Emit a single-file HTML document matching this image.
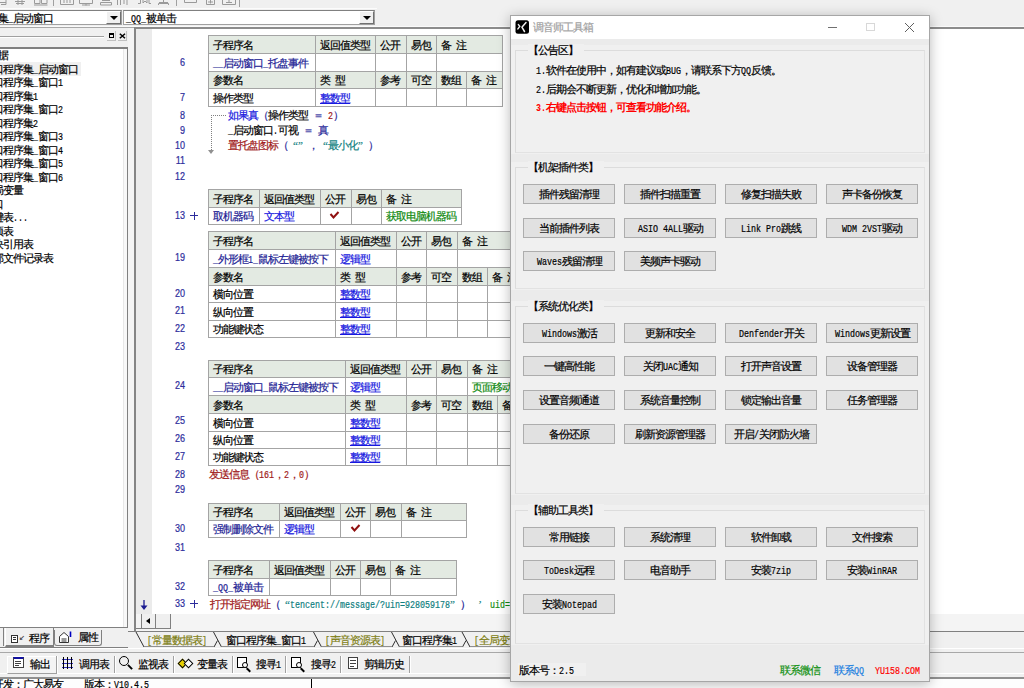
<!DOCTYPE html><html><head><meta charset="utf-8"><style>
*{margin:0;padding:0;box-sizing:border-box}
html,body{width:1024px;height:688px;overflow:hidden;background:#f0f0f0;font-family:"Liberation Sans",sans-serif;font-size:10px}
div{position:absolute}
.t{white-space:nowrap;letter-spacing:-1px;-webkit-text-stroke:0.2px currentColor}
.m{font-family:"Liberation Mono",monospace}
.s{font-family:"Liberation Serif",serif}
.a{display:inline-block;letter-spacing:0;font-family:"Liberation Mono",monospace;font-size:10px;transform:scaleX(.8333);transform-origin:0 50%;white-space:pre;overflow:visible}
.q{display:inline-block;letter-spacing:0;width:10px;font-family:"Liberation Serif",serif}
</style></head><body><div style="left:0px;top:0px;width:377px;height:9px;background:#f0f0f0;border-bottom:1px solid #fcfcfc"></div>
<svg style="position:absolute;left:0;top:0" width="250" height="9"><g fill="none" stroke="#9a9a9a" stroke-width="1">
<path d="M0 2.5 H6 M1 4.5 H6 V0"/>
<path d="M15 1.5 H25 M18 0 V5 M22 0 V5 M16 3.5 H24"/>
<path d="M34.5 0 V3.5 H40 V0 M41.5 0 V3.5 H47 V0 M34 5 H47.5"/>
<path d="M60.5 0 V4.5 H73.5 V0 M64 0 V3 M67 0 V3 M70 0 V3"/>
<path d="M79.5 0 V3.5 H92.5 V0 M86 3.5 V5.5 M82 5 H90"/>
<path d="M102 0.5 H110 M100.5 2.5 H111.5 V5 H100.5 Z"/>
<path d="M117.5 0 V5 M120.5 0 V5 M124 0 V4 M127 0 V5"/>
<path d="M138 3.5 H140.5 V0 M143 0 V3 L145 1 L147 3 V0 M149 0 V3.5 H151"/>
<path d="M163.5 0 V2.5 M159 2.5 H168 M158.5 5 V3.5 H168.5 V5"/>
<path d="M184.5 0 V2.5 H196.5 V0"/>
<path d="M206.5 0 V4.5 H214.5 V0 M210.5 0 V3.5 M208 2 H213"/>
<path d="M222.5 0 V4.5 H235.5 V0 M226 2.5 H232 M229 0 V3"/>
</g>
<path d="M53.5 0 V6 M176.5 0 V6 M239.5 0 V7" stroke="#a0a0a0" stroke-width="1"/>
</svg>
<div style="left:0px;top:10px;width:122px;height:15px;background:#fff;border:1px solid #a0a0a0;border-left:none;border-top-color:#808080"></div>
<div style="left:106px;top:11px;width:15px;height:13px;background:#f0f0f0;border-right:1px solid #707070;border-bottom:1px solid #707070;border-left:1px solid #fff;border-top:1px solid #fff"></div>
<div style="left:110px;top:16px;width:0;height:0;border-left:4px solid transparent;border-right:4px solid transparent;border-top:4px solid #000"></div>
<div class="t" style="left:-2px;top:11.5px;color:#000;font-size:11px;line-height:12px;text-align:left;">集<span class="a" style="width:5.0px">_</span>启动窗口</div>
<div style="left:123px;top:10px;width:252px;height:15px;background:#fff;border:1px solid #a0a0a0;border-top-color:#808080"></div>
<div style="left:359px;top:11px;width:15px;height:13px;background:#f0f0f0;border-right:1px solid #707070;border-bottom:1px solid #707070;border-left:1px solid #fff;border-top:1px solid #fff"></div>
<div style="left:363px;top:16px;width:0;height:0;border-left:4px solid transparent;border-right:4px solid transparent;border-top:4px solid #000"></div>
<div class="t" style="left:126px;top:11.5px;color:#000;font-size:11px;line-height:12px;text-align:left;"><span class="a" style="width:20.0px">_QQ_</span>被单击</div>
<div style="left:0px;top:26px;width:1024px;height:1px;background:#fafafa"></div>
<div style="left:0px;top:27px;width:1024px;height:1px;background:#a8a8a8"></div>
<div style="left:0px;top:36px;width:104px;height:1px;background:#a0a0a0"></div>
<div style="left:0px;top:37px;width:104px;height:1px;background:#fff"></div>
<div style="left:107px;top:31px;width:9px;height:10px;background:#f0f0f0;border-right:1px solid #c0c0c0;border-bottom:1px solid #c0c0c0"></div>
<div style="left:109px;top:33px;width:5px;height:5px;border:1px solid #000;border-top:2px solid #000"></div>
<div style="left:118px;top:31px;width:9px;height:10px;background:#f0f0f0;border-right:1px solid #c0c0c0;border-bottom:1px solid #c0c0c0"></div>
<svg style="position:absolute;left:119px;top:33px" width="7" height="6"><path d="M0.8 0.8 L6 5.2 M6 0.8 L0.8 5.2" stroke="#000" stroke-width="1.5"/></svg>
<div style="left:0px;top:47px;width:128px;height:581px;background:#fff;border-top:2px solid #808080;border-right:1px solid #808080"></div>
<div style="left:123px;top:49px;width:1px;height:578px;background:#e8e8e8"></div>
<div style="left:124px;top:49px;width:3px;height:578px;background:#f8f8f8"></div>
<div style="left:0px;top:62px;width:81px;height:14px;background:#f0f0f0"></div>
<div class="t" style="left:-2px;top:49.3px;color:#000;font-size:11px;line-height:12px;text-align:left;">据</div>
<div class="t" style="left:-7px;top:62.8px;color:#000;font-size:11px;line-height:12px;text-align:left;">口程序集<span class="a" style="width:5.0px">_</span>启动窗口</div>
<div class="t" style="left:-7px;top:76.3px;color:#000;font-size:11px;line-height:12px;text-align:left;">口程序集<span class="a" style="width:5.0px">_</span>窗口<span class="a" style="width:5.0px">1</span></div>
<div class="t" style="left:-7px;top:89.7px;color:#000;font-size:11px;line-height:12px;text-align:left;">口程序集<span class="a" style="width:5.0px">1</span></div>
<div class="t" style="left:-7px;top:103.2px;color:#000;font-size:11px;line-height:12px;text-align:left;">口程序集<span class="a" style="width:5.0px">_</span>窗口<span class="a" style="width:5.0px">2</span></div>
<div class="t" style="left:-7px;top:116.7px;color:#000;font-size:11px;line-height:12px;text-align:left;">口程序集<span class="a" style="width:5.0px">2</span></div>
<div class="t" style="left:-7px;top:130.2px;color:#000;font-size:11px;line-height:12px;text-align:left;">口程序集<span class="a" style="width:5.0px">_</span>窗口<span class="a" style="width:5.0px">3</span></div>
<div class="t" style="left:-7px;top:143.7px;color:#000;font-size:11px;line-height:12px;text-align:left;">口程序集<span class="a" style="width:5.0px">_</span>窗口<span class="a" style="width:5.0px">4</span></div>
<div class="t" style="left:-7px;top:157.1px;color:#000;font-size:11px;line-height:12px;text-align:left;">口程序集<span class="a" style="width:5.0px">_</span>窗口<span class="a" style="width:5.0px">5</span></div>
<div class="t" style="left:-7px;top:170.6px;color:#000;font-size:11px;line-height:12px;text-align:left;">口程序集<span class="a" style="width:5.0px">_</span>窗口<span class="a" style="width:5.0px">6</span></div>
<div class="t" style="left:-7px;top:184.1px;color:#000;font-size:11px;line-height:12px;text-align:left;">局变量</div>
<div class="t" style="left:-7px;top:197.6px;color:#000;font-size:11px;line-height:12px;text-align:left;">口</div>
<div class="t" style="left:-7px;top:211.1px;color:#000;font-size:11px;line-height:12px;text-align:left;">键表<span class="a" style="width:15.0px">...</span></div>
<div class="t" style="left:-7px;top:224.5px;color:#000;font-size:11px;line-height:12px;text-align:left;">项表</div>
<div class="t" style="left:-7px;top:238.0px;color:#000;font-size:11px;line-height:12px;text-align:left;">块引用表</div>
<div class="t" style="left:-7px;top:251.5px;color:#000;font-size:11px;line-height:12px;text-align:left;">部文件记录表</div>
<div style="left:0px;top:627px;width:128px;height:1px;background:#808080"></div>
<div style="left:0px;top:647px;width:128px;height:1px;background:#808080"></div>
<div style="left:5px;top:628px;width:49px;height:19px;background:#f0f0f0;border-left:1px solid #fff;border-right:1px solid #808080;border-bottom:2px solid #808080"></div>
<div style="left:54px;top:630px;width:48px;height:16px;background:#f0f0f0;border:1px solid #808080;border-top:none;border-radius:0 0 3px 3px"></div>
<div style="left:0px;top:628px;width:4px;height:18px;border-right:1px solid #808080"></div>
<div class="t" style="left:29px;top:631.5px;color:#000;font-size:11px;line-height:12px;text-align:left;">程序</div>
<div class="t" style="left:78px;top:630.5px;color:#000;font-size:11px;line-height:12px;text-align:left;">属性</div>
<div style="left:11px;top:635px;width:7px;height:8px;border:1px solid #333;background:#fff"></div>
<div style="left:13px;top:637px;width:3px;height:1px;background:#333"></div>
<div style="left:13px;top:639px;width:3px;height:1px;background:#333"></div>
<div class="t" style="left:19px;top:632.0px;color:#333;font-size:7px;line-height:12px;text-align:left;">↙</div>
<svg style="position:absolute;left:58px;top:631px" width="15" height="13"><path d="M1.5 5.5 L6 1.5 L10.5 5.5 V11.5 H1.5 Z M3.5 8 H8.5 M3.5 10 H8.5" fill="#fff" stroke="#333" stroke-width="1"/><path d="M12.5 0.5 V6" stroke="#0000c0" stroke-width="1.6"/></svg>
<div style="left:128px;top:28px;width:6px;height:604px;background:#f4f4f4"></div>
<div style="left:134px;top:27px;width:890px;height:605px;background:#fff;border-left:2px solid #858585;border-top:2px solid #8c8c8c"></div>
<div style="left:136px;top:29px;width:16px;height:585px;background:#ebebeb"></div>
<div style="left:136px;top:614px;width:888px;height:17px;background:#f4f4f4"></div>
<div style="left:136px;top:628px;width:35px;height:1px;background:#808080"></div>
<div style="left:141px;top:614px;width:1px;height:14px;background:#808080"></div>
<div style="left:142px;top:614px;width:14px;height:14px;background:#f0f0f0;border-right:1px solid #808080"></div>
<div style="left:146px;top:618px;width:0;height:0;border-top:3px solid transparent;border-bottom:3px solid transparent;border-right:4px solid #000"></div>
<div style="left:156px;top:614px;width:15px;height:14px;background:#efefef;border-right:1px solid #808080"></div>
<div style="left:208px;top:35px;width:295px;height:19px;background:#e3eae2;border:1px solid #a4a4a4"></div>
<div style="left:315px;top:35px;width:1px;height:19px;background:#a4a4a4"></div>
<div style="left:375px;top:35px;width:1px;height:19px;background:#a4a4a4"></div>
<div style="left:406px;top:35px;width:1px;height:19px;background:#a4a4a4"></div>
<div style="left:436px;top:35px;width:1px;height:19px;background:#a4a4a4"></div>
<div style="left:208px;top:53px;width:295px;height:19px;background:#fff;border:1px solid #a4a4a4"></div>
<div style="left:315px;top:53px;width:1px;height:19px;background:#a4a4a4"></div>
<div style="left:375px;top:53px;width:1px;height:19px;background:#a4a4a4"></div>
<div style="left:406px;top:53px;width:1px;height:19px;background:#a4a4a4"></div>
<div style="left:436px;top:53px;width:1px;height:19px;background:#a4a4a4"></div>
<div style="left:208px;top:71px;width:295px;height:18px;background:#e3eae2;border:1px solid #a4a4a4"></div>
<div style="left:315px;top:71px;width:1px;height:18px;background:#a4a4a4"></div>
<div style="left:375px;top:71px;width:1px;height:18px;background:#a4a4a4"></div>
<div style="left:406px;top:71px;width:1px;height:18px;background:#a4a4a4"></div>
<div style="left:436px;top:71px;width:1px;height:18px;background:#a4a4a4"></div>
<div style="left:466px;top:71px;width:1px;height:18px;background:#a4a4a4"></div>
<div style="left:208px;top:88px;width:295px;height:19px;background:#fff;border:1px solid #a4a4a4"></div>
<div style="left:315px;top:88px;width:1px;height:19px;background:#a4a4a4"></div>
<div style="left:375px;top:88px;width:1px;height:19px;background:#a4a4a4"></div>
<div style="left:406px;top:88px;width:1px;height:19px;background:#a4a4a4"></div>
<div style="left:436px;top:88px;width:1px;height:19px;background:#a4a4a4"></div>
<div style="left:466px;top:88px;width:1px;height:19px;background:#a4a4a4"></div>
<div class="t" style="left:213px;top:38.5px;color:#000;font-size:11px;line-height:12px;text-align:left;">子程序名</div>
<div class="t" style="left:320px;top:38.5px;color:#000;font-size:11px;line-height:12px;text-align:left;">返回值类型</div>
<div class="t" style="left:380px;top:38.5px;color:#000;font-size:11px;line-height:12px;text-align:left;">公开</div>
<div class="t" style="left:411px;top:38.5px;color:#000;font-size:11px;line-height:12px;text-align:left;">易包</div>
<div class="t" style="left:441px;top:38.5px;color:#000;font-size:11px;line-height:12px;text-align:left;">备<span class="a" style="width:5.0px"> </span>注</div>
<div class="t" style="left:213px;top:56.5px;color:#1c1c94;font-size:11px;line-height:12px;text-align:left;"><span class="a" style="width:10.0px">__</span>启动窗口<span class="a" style="width:5.0px">_</span>托盘事件</div>
<div class="t" style="left:213px;top:74.0px;color:#000;font-size:11px;line-height:12px;text-align:left;">参数名</div>
<div class="t" style="left:320px;top:74.0px;color:#000;font-size:11px;line-height:12px;text-align:left;">类<span class="a" style="width:5.0px"> </span>型</div>
<div class="t" style="left:380px;top:74.0px;color:#000;font-size:11px;line-height:12px;text-align:left;">参考</div>
<div class="t" style="left:411px;top:74.0px;color:#000;font-size:11px;line-height:12px;text-align:left;">可空</div>
<div class="t" style="left:441px;top:74.0px;color:#000;font-size:11px;line-height:12px;text-align:left;">数组</div>
<div class="t" style="left:471px;top:74.0px;color:#000;font-size:11px;line-height:12px;text-align:left;">备<span class="a" style="width:5.0px"> </span>注</div>
<div class="t" style="left:213px;top:91.5px;color:#000;font-size:11px;line-height:12px;text-align:left;">操作类型</div>
<div class="t" style="left:320px;top:91.5px;color:#1818e0;font-size:11px;line-height:12px;text-align:left;text-decoration:underline">整数型</div>
<div class="t" style="left:154px;top:56.5px;width:31px;text-align:right;line-height:12px;letter-spacing:0;color:#2c2c9c;font-size:10px;font-family:Liberation Sans;transform:scaleX(.9);transform-origin:100% 50%">6</div>
<div class="t" style="left:154px;top:91.5px;width:31px;text-align:right;line-height:12px;letter-spacing:0;color:#2c2c9c;font-size:10px;font-family:Liberation Sans;transform:scaleX(.9);transform-origin:100% 50%">7</div>
<div class="t" style="left:154px;top:109.5px;width:31px;text-align:right;line-height:12px;letter-spacing:0;color:#2c2c9c;font-size:10px;font-family:Liberation Sans;transform:scaleX(.9);transform-origin:100% 50%">8</div>
<div class="t" style="left:154px;top:124.5px;width:31px;text-align:right;line-height:12px;letter-spacing:0;color:#2c2c9c;font-size:10px;font-family:Liberation Sans;transform:scaleX(.9);transform-origin:100% 50%">9</div>
<div class="t" style="left:154px;top:139.5px;width:31px;text-align:right;line-height:12px;letter-spacing:0;color:#2c2c9c;font-size:10px;font-family:Liberation Sans;transform:scaleX(.9);transform-origin:100% 50%">10</div>
<div class="t" style="left:154px;top:154.5px;width:31px;text-align:right;line-height:12px;letter-spacing:0;color:#2c2c9c;font-size:10px;font-family:Liberation Sans;transform:scaleX(.9);transform-origin:100% 50%">11</div>
<div class="t" style="left:154px;top:170.5px;width:31px;text-align:right;line-height:12px;letter-spacing:0;color:#2c2c9c;font-size:10px;font-family:Liberation Sans;transform:scaleX(.9);transform-origin:100% 50%">12</div>
<div style="left:211px;top:115px;width:15px;height:37px;border-left:1px dotted #808080;border-top:1px dotted #808080"></div>
<div style="left:208px;top:150px;width:0;height:0;border-left:3.5px solid transparent;border-right:3.5px solid transparent;border-top:4px solid #909090"></div>
<div class="t" style="left:228px;top:109.0px;color:#1818e0;font-size:11px;line-height:12px;text-align:left;">如果真</div>
<div class="t" style="left:258px;top:109.0px;color:#000;font-size:11px;line-height:12px;text-align:left;"><span style="color:#2a2a9a">（</span>操作类型<span class="a" style="width:5.0px"> </span><span style="color:#2a2a9a">＝</span><span class="a" style="width:5.0px"> </span><span style="color:#a01010"><span class="a" style="width:5.0px">2</span></span><span style="color:#2a2a9a">）</span></div>
<div class="t" style="left:228px;top:124.0px;color:#000;font-size:11px;line-height:12px;text-align:left;"><span class="a" style="width:5.0px">_</span>启动窗口<span class="a" style="width:5.0px">.</span>可视<span class="a" style="width:5.0px"> </span><span style="color:#2a2a9a">＝<span class="a" style="width:5.0px"> </span>真</span></div>
<div class="t" style="left:228px;top:139.0px;color:#a01818;font-size:11px;line-height:12px;text-align:left;">置托盘图标</div>
<div class="t" style="left:278px;top:139.0px;color:#2a2a9a;font-size:11px;line-height:12px;text-align:left;">（<span style="color:#108080"><span class="q" style="text-align:right">“</span><span class="q">”</span></span>，<span style="color:#108080"><span class="q" style="text-align:right">“</span>最小化<span class="q">”</span></span>）</div>
<div style="left:208px;top:189px;width:254px;height:19px;background:#e3eae2;border:1px solid #a4a4a4"></div>
<div style="left:259px;top:189px;width:1px;height:19px;background:#a4a4a4"></div>
<div style="left:320px;top:189px;width:1px;height:19px;background:#a4a4a4"></div>
<div style="left:351px;top:189px;width:1px;height:19px;background:#a4a4a4"></div>
<div style="left:381px;top:189px;width:1px;height:19px;background:#a4a4a4"></div>
<div style="left:208px;top:207px;width:254px;height:18px;background:#fff;border:1px solid #a4a4a4"></div>
<div style="left:259px;top:207px;width:1px;height:18px;background:#a4a4a4"></div>
<div style="left:320px;top:207px;width:1px;height:18px;background:#a4a4a4"></div>
<div style="left:351px;top:207px;width:1px;height:18px;background:#a4a4a4"></div>
<div style="left:381px;top:207px;width:1px;height:18px;background:#a4a4a4"></div>
<div class="t" style="left:213px;top:192.5px;color:#000;font-size:11px;line-height:12px;text-align:left;">子程序名</div>
<div class="t" style="left:264px;top:192.5px;color:#000;font-size:11px;line-height:12px;text-align:left;">返回值类型</div>
<div class="t" style="left:325px;top:192.5px;color:#000;font-size:11px;line-height:12px;text-align:left;">公开</div>
<div class="t" style="left:356px;top:192.5px;color:#000;font-size:11px;line-height:12px;text-align:left;">易包</div>
<div class="t" style="left:386px;top:192.5px;color:#000;font-size:11px;line-height:12px;text-align:left;">备<span class="a" style="width:5.0px"> </span>注</div>
<div class="t" style="left:213px;top:210.0px;color:#1c1c94;font-size:11px;line-height:12px;text-align:left;">取机器码</div>
<div class="t" style="left:264px;top:210.0px;color:#1818e0;font-size:11px;line-height:12px;text-align:left;">文本型</div>
<div class="t" style="left:386px;top:210.0px;color:#108a10;font-size:11px;line-height:12px;text-align:left;">获取电脑机器码</div>
<svg style="position:absolute;left:329px;top:210px" width="11" height="10"><path d="M1.5 4 L4.5 7.5 L9.5 2" stroke="#901010" stroke-width="2" fill="none"/></svg>
<div class="t" style="left:154px;top:210.0px;width:31px;text-align:right;line-height:12px;letter-spacing:0;color:#2c2c9c;font-size:10px;font-family:Liberation Sans;transform:scaleX(.9);transform-origin:100% 50%">13</div>
<div style="left:190px;top:215px;width:8px;height:1px;background:#2c2c9c"></div>
<div style="left:193.5px;top:211.5px;width:1px;height:8px;background:#2c2c9c"></div>
<div style="left:208px;top:231px;width:333px;height:19px;background:#e3eae2;border:1px solid #a4a4a4"></div>
<div style="left:335px;top:231px;width:1px;height:19px;background:#a4a4a4"></div>
<div style="left:396px;top:231px;width:1px;height:19px;background:#a4a4a4"></div>
<div style="left:426px;top:231px;width:1px;height:19px;background:#a4a4a4"></div>
<div style="left:457px;top:231px;width:1px;height:19px;background:#a4a4a4"></div>
<div style="left:208px;top:249px;width:333px;height:19px;background:#fff;border:1px solid #a4a4a4"></div>
<div style="left:335px;top:249px;width:1px;height:19px;background:#a4a4a4"></div>
<div style="left:396px;top:249px;width:1px;height:19px;background:#a4a4a4"></div>
<div style="left:426px;top:249px;width:1px;height:19px;background:#a4a4a4"></div>
<div style="left:457px;top:249px;width:1px;height:19px;background:#a4a4a4"></div>
<div style="left:208px;top:267px;width:333px;height:19px;background:#e3eae2;border:1px solid #a4a4a4"></div>
<div style="left:335px;top:267px;width:1px;height:19px;background:#a4a4a4"></div>
<div style="left:396px;top:267px;width:1px;height:19px;background:#a4a4a4"></div>
<div style="left:426px;top:267px;width:1px;height:19px;background:#a4a4a4"></div>
<div style="left:457px;top:267px;width:1px;height:19px;background:#a4a4a4"></div>
<div style="left:487px;top:267px;width:1px;height:19px;background:#a4a4a4"></div>
<div style="left:208px;top:285px;width:333px;height:18px;background:#fff;border:1px solid #a4a4a4"></div>
<div style="left:335px;top:285px;width:1px;height:18px;background:#a4a4a4"></div>
<div style="left:396px;top:285px;width:1px;height:18px;background:#a4a4a4"></div>
<div style="left:426px;top:285px;width:1px;height:18px;background:#a4a4a4"></div>
<div style="left:457px;top:285px;width:1px;height:18px;background:#a4a4a4"></div>
<div style="left:487px;top:285px;width:1px;height:18px;background:#a4a4a4"></div>
<div style="left:208px;top:302px;width:333px;height:19px;background:#fff;border:1px solid #a4a4a4"></div>
<div style="left:335px;top:302px;width:1px;height:19px;background:#a4a4a4"></div>
<div style="left:396px;top:302px;width:1px;height:19px;background:#a4a4a4"></div>
<div style="left:426px;top:302px;width:1px;height:19px;background:#a4a4a4"></div>
<div style="left:457px;top:302px;width:1px;height:19px;background:#a4a4a4"></div>
<div style="left:487px;top:302px;width:1px;height:19px;background:#a4a4a4"></div>
<div style="left:208px;top:320px;width:333px;height:18px;background:#fff;border:1px solid #a4a4a4"></div>
<div style="left:335px;top:320px;width:1px;height:18px;background:#a4a4a4"></div>
<div style="left:396px;top:320px;width:1px;height:18px;background:#a4a4a4"></div>
<div style="left:426px;top:320px;width:1px;height:18px;background:#a4a4a4"></div>
<div style="left:457px;top:320px;width:1px;height:18px;background:#a4a4a4"></div>
<div style="left:487px;top:320px;width:1px;height:18px;background:#a4a4a4"></div>
<div class="t" style="left:213px;top:234.5px;color:#000;font-size:11px;line-height:12px;text-align:left;">子程序名</div>
<div class="t" style="left:340px;top:234.5px;color:#000;font-size:11px;line-height:12px;text-align:left;">返回值类型</div>
<div class="t" style="left:401px;top:234.5px;color:#000;font-size:11px;line-height:12px;text-align:left;">公开</div>
<div class="t" style="left:431px;top:234.5px;color:#000;font-size:11px;line-height:12px;text-align:left;">易包</div>
<div class="t" style="left:462px;top:234.5px;color:#000;font-size:11px;line-height:12px;text-align:left;">备<span class="a" style="width:5.0px"> </span>注</div>
<div class="t" style="left:213px;top:252.5px;color:#1c1c94;font-size:11px;line-height:12px;text-align:left;"><span class="a" style="width:5.0px">_</span>外形框<span class="a" style="width:10.0px">1_</span>鼠标左键被按下</div>
<div class="t" style="left:340px;top:252.5px;color:#1818e0;font-size:11px;line-height:12px;text-align:left;">逻辑型</div>
<div class="t" style="left:213px;top:270.5px;color:#000;font-size:11px;line-height:12px;text-align:left;">参数名</div>
<div class="t" style="left:340px;top:270.5px;color:#000;font-size:11px;line-height:12px;text-align:left;">类<span class="a" style="width:5.0px"> </span>型</div>
<div class="t" style="left:401px;top:270.5px;color:#000;font-size:11px;line-height:12px;text-align:left;">参考</div>
<div class="t" style="left:431px;top:270.5px;color:#000;font-size:11px;line-height:12px;text-align:left;">可空</div>
<div class="t" style="left:462px;top:270.5px;color:#000;font-size:11px;line-height:12px;text-align:left;">数组</div>
<div class="t" style="left:492px;top:270.5px;color:#000;font-size:11px;line-height:12px;text-align:left;">备<span class="a" style="width:5.0px"> </span>注</div>
<div class="t" style="left:213px;top:288.0px;color:#000;font-size:11px;line-height:12px;text-align:left;">横向位置</div>
<div class="t" style="left:340px;top:288.0px;color:#1818e0;font-size:11px;line-height:12px;text-align:left;text-decoration:underline">整数型</div>
<div class="t" style="left:213px;top:305.5px;color:#000;font-size:11px;line-height:12px;text-align:left;">纵向位置</div>
<div class="t" style="left:340px;top:305.5px;color:#1818e0;font-size:11px;line-height:12px;text-align:left;text-decoration:underline">整数型</div>
<div class="t" style="left:213px;top:323.0px;color:#000;font-size:11px;line-height:12px;text-align:left;">功能键状态</div>
<div class="t" style="left:340px;top:323.0px;color:#1818e0;font-size:11px;line-height:12px;text-align:left;text-decoration:underline">整数型</div>
<div class="t" style="left:154px;top:251.5px;width:31px;text-align:right;line-height:12px;letter-spacing:0;color:#2c2c9c;font-size:10px;font-family:Liberation Sans;transform:scaleX(.9);transform-origin:100% 50%">19</div>
<div class="t" style="left:154px;top:287.5px;width:31px;text-align:right;line-height:12px;letter-spacing:0;color:#2c2c9c;font-size:10px;font-family:Liberation Sans;transform:scaleX(.9);transform-origin:100% 50%">20</div>
<div class="t" style="left:154px;top:304.5px;width:31px;text-align:right;line-height:12px;letter-spacing:0;color:#2c2c9c;font-size:10px;font-family:Liberation Sans;transform:scaleX(.9);transform-origin:100% 50%">21</div>
<div class="t" style="left:154px;top:322.5px;width:31px;text-align:right;line-height:12px;letter-spacing:0;color:#2c2c9c;font-size:10px;font-family:Liberation Sans;transform:scaleX(.9);transform-origin:100% 50%">22</div>
<div class="t" style="left:154px;top:340.5px;width:31px;text-align:right;line-height:12px;letter-spacing:0;color:#2c2c9c;font-size:10px;font-family:Liberation Sans;transform:scaleX(.9);transform-origin:100% 50%">23</div>
<div style="left:208px;top:360px;width:333px;height:18px;background:#e3eae2;border:1px solid #a4a4a4"></div>
<div style="left:345px;top:360px;width:1px;height:18px;background:#a4a4a4"></div>
<div style="left:406px;top:360px;width:1px;height:18px;background:#a4a4a4"></div>
<div style="left:436px;top:360px;width:1px;height:18px;background:#a4a4a4"></div>
<div style="left:467px;top:360px;width:1px;height:18px;background:#a4a4a4"></div>
<div style="left:208px;top:377px;width:333px;height:19px;background:#fff;border:1px solid #a4a4a4"></div>
<div style="left:345px;top:377px;width:1px;height:19px;background:#a4a4a4"></div>
<div style="left:406px;top:377px;width:1px;height:19px;background:#a4a4a4"></div>
<div style="left:436px;top:377px;width:1px;height:19px;background:#a4a4a4"></div>
<div style="left:467px;top:377px;width:1px;height:19px;background:#a4a4a4"></div>
<div style="left:208px;top:395px;width:333px;height:19px;background:#e3eae2;border:1px solid #a4a4a4"></div>
<div style="left:345px;top:395px;width:1px;height:19px;background:#a4a4a4"></div>
<div style="left:406px;top:395px;width:1px;height:19px;background:#a4a4a4"></div>
<div style="left:436px;top:395px;width:1px;height:19px;background:#a4a4a4"></div>
<div style="left:467px;top:395px;width:1px;height:19px;background:#a4a4a4"></div>
<div style="left:497px;top:395px;width:1px;height:19px;background:#a4a4a4"></div>
<div style="left:208px;top:413px;width:333px;height:19px;background:#fff;border:1px solid #a4a4a4"></div>
<div style="left:345px;top:413px;width:1px;height:19px;background:#a4a4a4"></div>
<div style="left:406px;top:413px;width:1px;height:19px;background:#a4a4a4"></div>
<div style="left:436px;top:413px;width:1px;height:19px;background:#a4a4a4"></div>
<div style="left:467px;top:413px;width:1px;height:19px;background:#a4a4a4"></div>
<div style="left:497px;top:413px;width:1px;height:19px;background:#a4a4a4"></div>
<div style="left:208px;top:431px;width:333px;height:18px;background:#fff;border:1px solid #a4a4a4"></div>
<div style="left:345px;top:431px;width:1px;height:18px;background:#a4a4a4"></div>
<div style="left:406px;top:431px;width:1px;height:18px;background:#a4a4a4"></div>
<div style="left:436px;top:431px;width:1px;height:18px;background:#a4a4a4"></div>
<div style="left:467px;top:431px;width:1px;height:18px;background:#a4a4a4"></div>
<div style="left:497px;top:431px;width:1px;height:18px;background:#a4a4a4"></div>
<div style="left:208px;top:448px;width:333px;height:18px;background:#fff;border:1px solid #a4a4a4"></div>
<div style="left:345px;top:448px;width:1px;height:18px;background:#a4a4a4"></div>
<div style="left:406px;top:448px;width:1px;height:18px;background:#a4a4a4"></div>
<div style="left:436px;top:448px;width:1px;height:18px;background:#a4a4a4"></div>
<div style="left:467px;top:448px;width:1px;height:18px;background:#a4a4a4"></div>
<div style="left:497px;top:448px;width:1px;height:18px;background:#a4a4a4"></div>
<div class="t" style="left:213px;top:363.0px;color:#000;font-size:11px;line-height:12px;text-align:left;">子程序名</div>
<div class="t" style="left:350px;top:363.0px;color:#000;font-size:11px;line-height:12px;text-align:left;">返回值类型</div>
<div class="t" style="left:411px;top:363.0px;color:#000;font-size:11px;line-height:12px;text-align:left;">公开</div>
<div class="t" style="left:441px;top:363.0px;color:#000;font-size:11px;line-height:12px;text-align:left;">易包</div>
<div class="t" style="left:472px;top:363.0px;color:#000;font-size:11px;line-height:12px;text-align:left;">备<span class="a" style="width:5.0px"> </span>注</div>
<div class="t" style="left:213px;top:380.5px;color:#1c1c94;font-size:11px;line-height:12px;text-align:left;"><span class="a" style="width:10.0px">__</span>启动窗口<span class="a" style="width:5.0px">_</span>鼠标左键被按下</div>
<div class="t" style="left:350px;top:380.5px;color:#1818e0;font-size:11px;line-height:12px;text-align:left;">逻辑型</div>
<div class="t" style="left:472px;top:380.5px;color:#108a10;font-size:11px;line-height:12px;text-align:left;">页面移动</div>
<div class="t" style="left:213px;top:398.5px;color:#000;font-size:11px;line-height:12px;text-align:left;">参数名</div>
<div class="t" style="left:350px;top:398.5px;color:#000;font-size:11px;line-height:12px;text-align:left;">类<span class="a" style="width:5.0px"> </span>型</div>
<div class="t" style="left:411px;top:398.5px;color:#000;font-size:11px;line-height:12px;text-align:left;">参考</div>
<div class="t" style="left:441px;top:398.5px;color:#000;font-size:11px;line-height:12px;text-align:left;">可空</div>
<div class="t" style="left:472px;top:398.5px;color:#000;font-size:11px;line-height:12px;text-align:left;">数组</div>
<div class="t" style="left:502px;top:398.5px;color:#000;font-size:11px;line-height:12px;text-align:left;">备<span class="a" style="width:5.0px"> </span>注</div>
<div class="t" style="left:213px;top:416.5px;color:#000;font-size:11px;line-height:12px;text-align:left;">横向位置</div>
<div class="t" style="left:350px;top:416.5px;color:#1818e0;font-size:11px;line-height:12px;text-align:left;text-decoration:underline">整数型</div>
<div class="t" style="left:213px;top:434.0px;color:#000;font-size:11px;line-height:12px;text-align:left;">纵向位置</div>
<div class="t" style="left:350px;top:434.0px;color:#1818e0;font-size:11px;line-height:12px;text-align:left;text-decoration:underline">整数型</div>
<div class="t" style="left:213px;top:451.0px;color:#000;font-size:11px;line-height:12px;text-align:left;">功能键状态</div>
<div class="t" style="left:350px;top:451.0px;color:#1818e0;font-size:11px;line-height:12px;text-align:left;text-decoration:underline">整数型</div>
<div class="t" style="left:154px;top:379.5px;width:31px;text-align:right;line-height:12px;letter-spacing:0;color:#2c2c9c;font-size:10px;font-family:Liberation Sans;transform:scaleX(.9);transform-origin:100% 50%">24</div>
<div class="t" style="left:154px;top:414.5px;width:31px;text-align:right;line-height:12px;letter-spacing:0;color:#2c2c9c;font-size:10px;font-family:Liberation Sans;transform:scaleX(.9);transform-origin:100% 50%">25</div>
<div class="t" style="left:154px;top:432.5px;width:31px;text-align:right;line-height:12px;letter-spacing:0;color:#2c2c9c;font-size:10px;font-family:Liberation Sans;transform:scaleX(.9);transform-origin:100% 50%">26</div>
<div class="t" style="left:154px;top:450.5px;width:31px;text-align:right;line-height:12px;letter-spacing:0;color:#2c2c9c;font-size:10px;font-family:Liberation Sans;transform:scaleX(.9);transform-origin:100% 50%">27</div>
<div class="t" style="left:154px;top:468.5px;width:31px;text-align:right;line-height:12px;letter-spacing:0;color:#2c2c9c;font-size:10px;font-family:Liberation Sans;transform:scaleX(.9);transform-origin:100% 50%">28</div>
<div class="t" style="left:154px;top:483.5px;width:31px;text-align:right;line-height:12px;letter-spacing:0;color:#2c2c9c;font-size:10px;font-family:Liberation Sans;transform:scaleX(.9);transform-origin:100% 50%">29</div>
<div class="t" style="left:209px;top:468.0px;color:#a01818;font-size:11px;line-height:12px;text-align:left;">发送信息</div>
<div class="t" style="left:249px;top:468.0px;color:#a01818;font-size:11px;line-height:12px;text-align:left;">（<span class="a" style="width:15.0px">161</span>，<span class="a" style="width:5.0px">2</span>，<span class="a" style="width:5.0px">0</span>）</div>
<div style="left:208px;top:503px;width:259px;height:18px;background:#e3eae2;border:1px solid #a4a4a4"></div>
<div style="left:279px;top:503px;width:1px;height:18px;background:#a4a4a4"></div>
<div style="left:340px;top:503px;width:1px;height:18px;background:#a4a4a4"></div>
<div style="left:370px;top:503px;width:1px;height:18px;background:#a4a4a4"></div>
<div style="left:401px;top:503px;width:1px;height:18px;background:#a4a4a4"></div>
<div style="left:208px;top:520px;width:259px;height:18px;background:#fff;border:1px solid #a4a4a4"></div>
<div style="left:279px;top:520px;width:1px;height:18px;background:#a4a4a4"></div>
<div style="left:340px;top:520px;width:1px;height:18px;background:#a4a4a4"></div>
<div style="left:370px;top:520px;width:1px;height:18px;background:#a4a4a4"></div>
<div style="left:401px;top:520px;width:1px;height:18px;background:#a4a4a4"></div>
<div class="t" style="left:213px;top:506.0px;color:#000;font-size:11px;line-height:12px;text-align:left;">子程序名</div>
<div class="t" style="left:284px;top:506.0px;color:#000;font-size:11px;line-height:12px;text-align:left;">返回值类型</div>
<div class="t" style="left:345px;top:506.0px;color:#000;font-size:11px;line-height:12px;text-align:left;">公开</div>
<div class="t" style="left:375px;top:506.0px;color:#000;font-size:11px;line-height:12px;text-align:left;">易包</div>
<div class="t" style="left:406px;top:506.0px;color:#000;font-size:11px;line-height:12px;text-align:left;">备<span class="a" style="width:5.0px"> </span>注</div>
<div class="t" style="left:213px;top:523.0px;color:#1c1c94;font-size:11px;line-height:12px;text-align:left;">强制删除文件</div>
<div class="t" style="left:284px;top:523.0px;color:#1818e0;font-size:11px;line-height:12px;text-align:left;">逻辑型</div>
<svg style="position:absolute;left:350px;top:523px" width="11" height="10"><path d="M1.5 4 L4.5 7.5 L9.5 2" stroke="#901010" stroke-width="2" fill="none"/></svg>
<div class="t" style="left:154px;top:523.0px;width:31px;text-align:right;line-height:12px;letter-spacing:0;color:#2c2c9c;font-size:10px;font-family:Liberation Sans;transform:scaleX(.9);transform-origin:100% 50%">30</div>
<div class="t" style="left:154px;top:541.5px;width:31px;text-align:right;line-height:12px;letter-spacing:0;color:#2c2c9c;font-size:10px;font-family:Liberation Sans;transform:scaleX(.9);transform-origin:100% 50%">31</div>
<div style="left:208px;top:560px;width:249px;height:19px;background:#e3eae2;border:1px solid #a4a4a4"></div>
<div style="left:269px;top:560px;width:1px;height:19px;background:#a4a4a4"></div>
<div style="left:330px;top:560px;width:1px;height:19px;background:#a4a4a4"></div>
<div style="left:360px;top:560px;width:1px;height:19px;background:#a4a4a4"></div>
<div style="left:390px;top:560px;width:1px;height:19px;background:#a4a4a4"></div>
<div style="left:208px;top:578px;width:249px;height:18px;background:#fff;border:1px solid #a4a4a4"></div>
<div style="left:269px;top:578px;width:1px;height:18px;background:#a4a4a4"></div>
<div style="left:330px;top:578px;width:1px;height:18px;background:#a4a4a4"></div>
<div style="left:360px;top:578px;width:1px;height:18px;background:#a4a4a4"></div>
<div style="left:390px;top:578px;width:1px;height:18px;background:#a4a4a4"></div>
<div class="t" style="left:213px;top:563.5px;color:#000;font-size:11px;line-height:12px;text-align:left;">子程序名</div>
<div class="t" style="left:274px;top:563.5px;color:#000;font-size:11px;line-height:12px;text-align:left;">返回值类型</div>
<div class="t" style="left:335px;top:563.5px;color:#000;font-size:11px;line-height:12px;text-align:left;">公开</div>
<div class="t" style="left:365px;top:563.5px;color:#000;font-size:11px;line-height:12px;text-align:left;">易包</div>
<div class="t" style="left:395px;top:563.5px;color:#000;font-size:11px;line-height:12px;text-align:left;">备<span class="a" style="width:5.0px"> </span>注</div>
<div class="t" style="left:213px;top:581.0px;color:#1c1c94;font-size:11px;line-height:12px;text-align:left;"><span class="a" style="width:20.0px">_QQ_</span>被单击</div>
<div class="t" style="left:154px;top:580.5px;width:31px;text-align:right;line-height:12px;letter-spacing:0;color:#2c2c9c;font-size:10px;font-family:Liberation Sans;transform:scaleX(.9);transform-origin:100% 50%">32</div>
<div class="t" style="left:154px;top:598.1px;width:31px;text-align:right;line-height:12px;letter-spacing:0;color:#2c2c9c;font-size:10px;font-family:Liberation Sans;transform:scaleX(.9);transform-origin:100% 50%">33</div>
<div style="left:190px;top:603px;width:8px;height:1px;background:#2c2c9c"></div>
<div style="left:193.5px;top:599.5px;width:1px;height:8px;background:#2c2c9c"></div>
<svg style="position:absolute;left:140px;top:600px" width="8" height="11"><path d="M4 0 V7" stroke="#1a1a90" stroke-width="1.3"/><path d="M0.5 5.5 L4 10 L7.5 5.5 Z" fill="#1a1a90"/></svg>
<div class="t" style="left:210px;top:598.0px;color:#a01818;font-size:11px;line-height:12px;text-align:left;">打开指定网址</div>
<div class="t" style="left:270px;top:598.0px;color:#1a1a90;font-size:11px;line-height:12px;text-align:left;">（<span style="color:#108080"><span class="q" style="text-align:right">“</span><span class="a" style="width:160.0px">tencent://message/?uin=928059178</span><span class="q">”</span></span>）<span class="a" style="width:5.0px"> </span><span style="color:#108080"><span class="q" style="text-align:center">’</span></span><span class="a" style="width:5.0px"> </span><span style="color:#108a10"><span class="a" style="width:20.0px">uid=</span></span></div>
<div style="left:128px;top:631px;width:896px;height:17px;background:#f0f0f0;border-top:1px solid #808080"></div>
<svg style="position:absolute;left:0;top:0" width="1024" height="688">
<path d="M136 632 L144 647 M213.5 632 L221.5 647 M217.5 640.5 L214 647 M313.5 632 L321.5 647 M317.5 640.5 L314 647 M391.5 632 L399.5 647 M395.5 640.5 L392 647 M462 632 L470 647 M466 640.5 L462.5 647" fill="none" stroke="#303030" stroke-width="1"/>
<path d="M144 646.5 H214 M221.5 646.5 H314 M321.5 646.5 H392 M399.5 646.5 H462.5 M470 646.5 H520" stroke="#909090" stroke-width="1.2"/>
</svg>
<div class="t" style="left:147px;top:633.6px;color:#7d7d12;font-size:11px;line-height:12px;text-align:left;"><span class="a" style="width:5.0px">[</span>常量数据表<span class="a" style="width:5.0px">]</span></div>
<div class="t" style="left:226px;top:633.6px;color:#000;font-size:11px;line-height:12px;text-align:left;">窗口程序集<span class="a" style="width:5.0px">_</span>窗口<span class="a" style="width:5.0px">1</span></div>
<div class="t" style="left:325px;top:633.6px;color:#7d7d12;font-size:11px;line-height:12px;text-align:left;"><span class="a" style="width:5.0px">[</span>声音资源表<span class="a" style="width:5.0px">]</span></div>
<div class="t" style="left:402px;top:633.6px;color:#000;font-size:11px;line-height:12px;text-align:left;">窗口程序集<span class="a" style="width:5.0px">1</span></div>
<div class="t" style="left:474px;top:633.6px;color:#7d7d12;font-size:11px;line-height:12px;text-align:left;"><span class="a" style="width:5.0px">[</span>全局变量表<span class="a" style="width:5.0px">]</span></div>
<div style="left:0px;top:648px;width:1024px;height:1px;background:#fff"></div>
<div style="left:0px;top:652px;width:1024px;height:1px;background:#a8a8a8"></div>
<div style="left:0px;top:653px;width:1024px;height:24px;background:#f0f0f0"></div>
<div style="left:0px;top:673px;width:1024px;height:1px;background:#fff"></div>
<div style="left:0px;top:677px;width:1024px;height:2px;background:#909090"></div>
<div style="left:0px;top:679px;width:1024px;height:9px;background:#fdfdfd"></div>
<div style="left:7px;top:656px;width:50px;height:18px;background:#f4f4f4;border:1px solid #fff;border-right-color:#a0a0a0;border-bottom-color:#a0a0a0"></div>
<div style="left:56px;top:656px;width:1px;height:17px;background:#a0a0a0"></div>
<div style="left:57px;top:656px;width:1px;height:17px;background:#fff"></div>
<div style="left:114px;top:656px;width:1px;height:17px;background:#a0a0a0"></div>
<div style="left:115px;top:656px;width:1px;height:17px;background:#fff"></div>
<div style="left:173px;top:656px;width:1px;height:17px;background:#a0a0a0"></div>
<div style="left:174px;top:656px;width:1px;height:17px;background:#fff"></div>
<div style="left:232px;top:656px;width:1px;height:17px;background:#a0a0a0"></div>
<div style="left:233px;top:656px;width:1px;height:17px;background:#fff"></div>
<div style="left:285px;top:656px;width:1px;height:17px;background:#a0a0a0"></div>
<div style="left:286px;top:656px;width:1px;height:17px;background:#fff"></div>
<div style="left:340px;top:656px;width:1px;height:17px;background:#a0a0a0"></div>
<div style="left:341px;top:656px;width:1px;height:17px;background:#fff"></div>
<div style="left:409px;top:656px;width:1px;height:17px;background:#a0a0a0"></div>
<div style="left:410px;top:656px;width:1px;height:17px;background:#fff"></div>
<div style="left:13px;top:657px;width:11px;height:11px;border:1px solid #404040;background:#fff;border-top:2px solid #1010a0"></div>
<div style="left:15px;top:661px;width:6px;height:1px;background:#404040"></div>
<div style="left:15px;top:663px;width:6px;height:1px;background:#404040"></div>
<div style="left:15px;top:665px;width:4px;height:1px;background:#404040"></div>
<div class="t" style="left:30px;top:658.2px;color:#000;font-size:11px;line-height:12px;text-align:left;">输出</div>
<div style="left:62px;top:659px;width:11px;height:1px;background:#3030c0"></div>
<div style="left:62px;top:663px;width:11px;height:1px;background:#3030c0"></div>
<div style="left:62px;top:667px;width:11px;height:1px;background:#3030c0"></div>
<div style="left:63px;top:657px;width:1px;height:12px;background:#000"></div>
<div style="left:67px;top:657px;width:1px;height:12px;background:#000"></div>
<div style="left:71px;top:657px;width:1px;height:12px;background:#000"></div>
<div class="t" style="left:79px;top:658.2px;color:#000;font-size:11px;line-height:12px;text-align:left;">调用表</div>
<div style="left:119px;top:656px;width:10px;height:10px;border:1.5px solid #000;border-radius:50%"></div>
<div style="left:127px;top:666px;width:6px;height:2px;background:#000;transform:rotate(45deg)"></div>
<div class="t" style="left:138px;top:658.2px;color:#000;font-size:11px;line-height:12px;text-align:left;">监视表</div>
<div style="left:179px;top:660px;width:7px;height:7px;background:#e8d000;border:1px solid #000;transform:rotate(45deg)"></div>
<div style="left:185px;top:660px;width:7px;height:7px;background:#fff;border:1px solid #000;transform:rotate(45deg)"></div>
<div class="t" style="left:197px;top:658.2px;color:#000;font-size:11px;line-height:12px;text-align:left;">变量表</div>
<div style="left:237px;top:657px;width:10px;height:11px;border:1px solid #000;background:#fff"></div>
<div style="left:242px;top:662px;width:6px;height:6px;border:1px solid #000;border-radius:50%;background:#fff"></div>
<div style="left:246px;top:669px;width:5px;height:2px;background:#000;transform:rotate(45deg)"></div>
<div style="left:291px;top:657px;width:10px;height:11px;border:1px solid #000;background:#fff"></div>
<div style="left:296px;top:662px;width:6px;height:6px;border:1px solid #000;border-radius:50%;background:#fff"></div>
<div style="left:300px;top:669px;width:5px;height:2px;background:#000;transform:rotate(45deg)"></div>
<div class="t" style="left:256px;top:658.2px;color:#000;font-size:11px;line-height:12px;text-align:left;">搜寻<span class="a" style="width:5.0px">1</span></div>
<div class="t" style="left:311px;top:658.2px;color:#000;font-size:11px;line-height:12px;text-align:left;">搜寻<span class="a" style="width:5.0px">2</span></div>
<div style="left:348px;top:657px;width:10px;height:12px;border:1px solid #404040;background:#fff"></div>
<div style="left:350px;top:660px;width:6px;height:1px;background:#404040"></div>
<div style="left:350px;top:663px;width:6px;height:1px;background:#404040"></div>
<div style="left:350px;top:666px;width:4px;height:1px;background:#404040"></div>
<div class="t" style="left:364px;top:658.2px;color:#000;font-size:11px;line-height:12px;text-align:left;">剪辑历史</div>
<div class="t" style="left:-7px;top:677.5px;color:#000;font-size:11px;line-height:12px;text-align:left;">开发：广大易友</div>
<div class="t" style="left:84px;top:677.5px;color:#000;font-size:11px;line-height:12px;text-align:left;">版本：<span class="a" style="width:35.0px">V10.4.5</span></div>
<div style="left:311px;top:679px;width:1px;height:9px;background:#000"></div>
<div style="left:510px;top:15px;width:420px;height:667px;background:#ebebeb;border:1px solid #a6a6a6;box-shadow:0 2px 12px rgba(0,0,0,.28)"></div>
<div style="left:511px;top:16px;width:418px;height:23px;background:#fff"></div>
<svg style="position:absolute;left:515px;top:20px" width="15" height="15" viewBox="0 0 15 15"><rect x="0.5" y="0.2" width="13.5" height="13.5" rx="2.5" fill="#000"/><path d="M3.4 4.6 L4.8 6.4 L2.9 8.9 M11 2.5 L6.9 7.2 L9.5 11.5" stroke="#f0f0f0" stroke-width="1.5" fill="none" stroke-linecap="round" stroke-linejoin="round"/></svg>
<div class="t" style="left:533px;top:20.5px;color:#a0a0a0;font-size:11px;line-height:12px;text-align:left;">调音师工具箱</div>
<div style="left:828px;top:27px;width:9px;height:1px;background:#707070"></div>
<div style="left:866px;top:23px;width:9px;height:8px;border:1px solid #d8d8d8"></div>
<svg style="position:absolute;left:904px;top:22px" width="11" height="11"><path d="M1 1 L10 10 M10 1 L1 10" stroke="#606060" stroke-width="1"/></svg>
<div style="left:511px;top:45px;width:418px;height:109px;background:#f0f0f0"></div>
<div style="left:515px;top:50px;width:410px;height:103px;border:1px solid #dcdcdc;border-right-color:#e2e2e2;border-bottom-color:#e2e2e2"></div>
<div class="t" style="left:528px;top:44px;width:56px;height:12px;line-height:12px;background:#f0f0f0;color:#000;font-size:11px;padding-left:0px">【公告区】</div>
<div style="left:511px;top:162px;width:418px;height:128px;background:#f0f0f0"></div>
<div style="left:515px;top:167px;width:410px;height:122px;border:1px solid #dcdcdc;border-right-color:#e2e2e2;border-bottom-color:#e2e2e2"></div>
<div class="t" style="left:528px;top:161px;width:76px;height:12px;line-height:12px;background:#f0f0f0;color:#000;font-size:11px;padding-left:0px">【机架插件类】</div>
<div style="left:511px;top:301px;width:418px;height:194px;background:#f0f0f0"></div>
<div style="left:515px;top:306px;width:410px;height:188px;border:1px solid #dcdcdc;border-right-color:#e2e2e2;border-bottom-color:#e2e2e2"></div>
<div class="t" style="left:528px;top:300px;width:76px;height:12px;line-height:12px;background:#f0f0f0;color:#000;font-size:11px;padding-left:0px">【系统优化类】</div>
<div style="left:511px;top:505px;width:418px;height:140px;background:#f0f0f0"></div>
<div style="left:515px;top:510px;width:410px;height:134px;border:1px solid #dcdcdc;border-right-color:#e2e2e2;border-bottom-color:#e2e2e2"></div>
<div class="t" style="left:528px;top:504px;width:76px;height:12px;line-height:12px;background:#f0f0f0;color:#000;font-size:11px;padding-left:0px">【辅助工具类】</div>
<div class="t" style="left:536px;top:64.0px;color:#000;font-size:11px;line-height:12px;text-align:left;"><span class="a" style="width:10.0px">1.</span>软件在使用中，如有建议或<span class="a" style="width:15.0px">BUG</span>，请联系下方<span class="a" style="width:10.0px">QQ</span>反馈。</div>
<div class="t" style="left:536px;top:82.5px;color:#000;font-size:11px;line-height:12px;text-align:left;"><span class="a" style="width:10.0px">2.</span>后期会不断更新，优化和增加功能。</div>
<div class="t" style="left:536px;top:101.0px;color:#ff0000;font-size:11px;line-height:12px;text-align:left;font-weight:bold;-webkit-text-stroke:0"><span class="a" style="width:10.0px">3.</span>右键点击按钮，可查看功能介绍。</div>
<div class="t" style="left:523px;top:184px;width:92px;height:20px;background:#e1e1e1;border:1px solid #adadad;text-align:center;line-height:19px;font-size:11px;color:#000">插件残留清理</div>
<div class="t" style="left:624px;top:184px;width:92px;height:20px;background:#e1e1e1;border:1px solid #adadad;text-align:center;line-height:19px;font-size:11px;color:#000">插件扫描重置</div>
<div class="t" style="left:725px;top:184px;width:92px;height:20px;background:#e1e1e1;border:1px solid #adadad;text-align:center;line-height:19px;font-size:11px;color:#000">修复扫描失败</div>
<div class="t" style="left:826px;top:184px;width:92px;height:20px;background:#e1e1e1;border:1px solid #adadad;text-align:center;line-height:19px;font-size:11px;color:#000">声卡备份恢复</div>
<div class="t" style="left:523px;top:218px;width:92px;height:20px;background:#e1e1e1;border:1px solid #adadad;text-align:center;line-height:19px;font-size:11px;color:#000">当前插件列表</div>
<div class="t" style="left:624px;top:218px;width:92px;height:20px;background:#e1e1e1;border:1px solid #adadad;text-align:center;line-height:19px;font-size:11px;color:#000"><span class="a" style="width:45.0px">ASIO 4ALL</span>驱动</div>
<div class="t" style="left:725px;top:218px;width:92px;height:20px;background:#e1e1e1;border:1px solid #adadad;text-align:center;line-height:19px;font-size:11px;color:#000"><span class="a" style="width:40.0px">Link Pro</span>跳线</div>
<div class="t" style="left:826px;top:218px;width:92px;height:20px;background:#e1e1e1;border:1px solid #adadad;text-align:center;line-height:19px;font-size:11px;color:#000"><span class="a" style="width:40.0px">WDM 2VST</span>驱动</div>
<div class="t" style="left:523px;top:251px;width:92px;height:20px;background:#e1e1e1;border:1px solid #adadad;text-align:center;line-height:19px;font-size:11px;color:#000"><span class="a" style="width:25.0px">Waves</span>残留清理</div>
<div class="t" style="left:624px;top:251px;width:92px;height:20px;background:#e1e1e1;border:1px solid #adadad;text-align:center;line-height:19px;font-size:11px;color:#000">美频声卡驱动</div>
<div class="t" style="left:523px;top:323px;width:92px;height:20px;background:#e1e1e1;border:1px solid #adadad;text-align:center;line-height:19px;font-size:11px;color:#000"><span class="a" style="width:35.0px">Windows</span>激活</div>
<div class="t" style="left:624px;top:323px;width:92px;height:20px;background:#e1e1e1;border:1px solid #adadad;text-align:center;line-height:19px;font-size:11px;color:#000">更新和安全</div>
<div class="t" style="left:725px;top:323px;width:92px;height:20px;background:#e1e1e1;border:1px solid #adadad;text-align:center;line-height:19px;font-size:11px;color:#000"><span class="a" style="width:45.0px">Denfender</span>开关</div>
<div class="t" style="left:826px;top:323px;width:92px;height:20px;background:#e1e1e1;border:1px solid #adadad;text-align:center;line-height:19px;font-size:11px;color:#000"><span class="a" style="width:35.0px">Windows</span>更新设置</div>
<div class="t" style="left:523px;top:356px;width:92px;height:20px;background:#e1e1e1;border:1px solid #adadad;text-align:center;line-height:19px;font-size:11px;color:#000">一键高性能</div>
<div class="t" style="left:624px;top:356px;width:92px;height:20px;background:#e1e1e1;border:1px solid #adadad;text-align:center;line-height:19px;font-size:11px;color:#000">关闭<span class="a" style="width:15.0px">UAC</span>通知</div>
<div class="t" style="left:725px;top:356px;width:92px;height:20px;background:#e1e1e1;border:1px solid #adadad;text-align:center;line-height:19px;font-size:11px;color:#000">打开声音设置</div>
<div class="t" style="left:826px;top:356px;width:92px;height:20px;background:#e1e1e1;border:1px solid #adadad;text-align:center;line-height:19px;font-size:11px;color:#000">设备管理器</div>
<div class="t" style="left:523px;top:390px;width:92px;height:20px;background:#e1e1e1;border:1px solid #adadad;text-align:center;line-height:19px;font-size:11px;color:#000">设置音频通道</div>
<div class="t" style="left:624px;top:390px;width:92px;height:20px;background:#e1e1e1;border:1px solid #adadad;text-align:center;line-height:19px;font-size:11px;color:#000">系统音量控制</div>
<div class="t" style="left:725px;top:390px;width:92px;height:20px;background:#e1e1e1;border:1px solid #adadad;text-align:center;line-height:19px;font-size:11px;color:#000">锁定输出音量</div>
<div class="t" style="left:826px;top:390px;width:92px;height:20px;background:#e1e1e1;border:1px solid #adadad;text-align:center;line-height:19px;font-size:11px;color:#000">任务管理器</div>
<div class="t" style="left:523px;top:424px;width:92px;height:20px;background:#e1e1e1;border:1px solid #adadad;text-align:center;line-height:19px;font-size:11px;color:#000">备份还原</div>
<div class="t" style="left:624px;top:424px;width:92px;height:20px;background:#e1e1e1;border:1px solid #adadad;text-align:center;line-height:19px;font-size:11px;color:#000">刷新资源管理器</div>
<div class="t" style="left:725px;top:424px;width:92px;height:20px;background:#e1e1e1;border:1px solid #adadad;text-align:center;line-height:19px;font-size:11px;color:#000">开启<span class="a" style="width:5.0px">/</span>关闭防火墙</div>
<div class="t" style="left:523px;top:527px;width:92px;height:20px;background:#e1e1e1;border:1px solid #adadad;text-align:center;line-height:19px;font-size:11px;color:#000">常用链接</div>
<div class="t" style="left:624px;top:527px;width:92px;height:20px;background:#e1e1e1;border:1px solid #adadad;text-align:center;line-height:19px;font-size:11px;color:#000">系统清理</div>
<div class="t" style="left:725px;top:527px;width:92px;height:20px;background:#e1e1e1;border:1px solid #adadad;text-align:center;line-height:19px;font-size:11px;color:#000">软件卸载</div>
<div class="t" style="left:826px;top:527px;width:92px;height:20px;background:#e1e1e1;border:1px solid #adadad;text-align:center;line-height:19px;font-size:11px;color:#000">文件搜索</div>
<div class="t" style="left:523px;top:560px;width:92px;height:20px;background:#e1e1e1;border:1px solid #adadad;text-align:center;line-height:19px;font-size:11px;color:#000"><span class="a" style="width:30.0px">ToDesk</span>远程</div>
<div class="t" style="left:624px;top:560px;width:92px;height:20px;background:#e1e1e1;border:1px solid #adadad;text-align:center;line-height:19px;font-size:11px;color:#000">电音助手</div>
<div class="t" style="left:725px;top:560px;width:92px;height:20px;background:#e1e1e1;border:1px solid #adadad;text-align:center;line-height:19px;font-size:11px;color:#000">安装<span class="a" style="width:20.0px">7zip</span></div>
<div class="t" style="left:826px;top:560px;width:92px;height:20px;background:#e1e1e1;border:1px solid #adadad;text-align:center;line-height:19px;font-size:11px;color:#000">安装<span class="a" style="width:30.0px">WinRAR</span></div>
<div class="t" style="left:523px;top:594px;width:92px;height:20px;background:#e1e1e1;border:1px solid #adadad;text-align:center;line-height:19px;font-size:11px;color:#000">安装<span class="a" style="width:35.0px">Notepad</span></div>
<div style="left:518px;top:663px;width:68px;height:13px;background:#f0f0f0"></div>
<div class="t" style="left:519px;top:663.5px;color:#000;font-size:11px;line-height:12px;text-align:left;">版本号：<span class="a" style="width:15.0px">2.5</span></div>
<div class="t" style="left:780px;top:663.5px;color:#109010;font-size:11px;line-height:12px;text-align:left;">联系微信</div>
<div class="t" style="left:834px;top:663.5px;color:#2080e0;font-size:11px;line-height:12px;text-align:left;">联系<span class="a" style="width:10.0px">QQ</span></div>
<div class="t" style="left:875px;top:663.5px;color:#ff0000;font-size:11px;line-height:12px;text-align:left;"><span class="a" style="width:45.0px">YU158.COM</span></div></body></html>
